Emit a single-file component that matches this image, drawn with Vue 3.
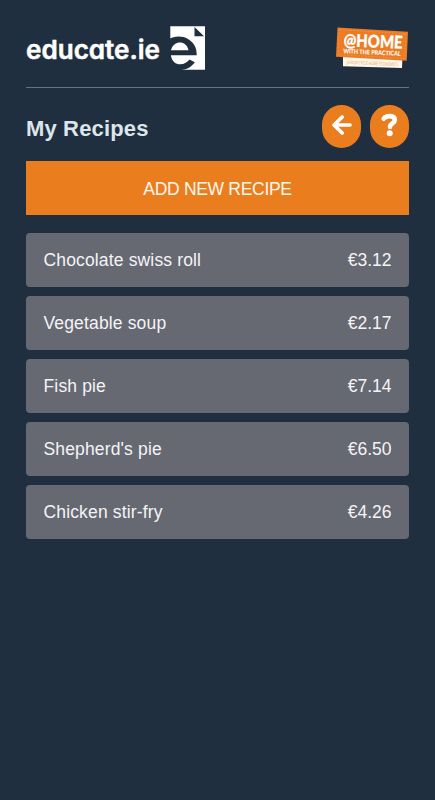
<script setup>
import { ref } from 'vue'

// Saved recipes with their total cost
const recipes = ref([
  { id: 1, name: 'Chocolate swiss roll', price: 3.12 },
  { id: 2, name: 'Vegetable soup', price: 2.17 },
  { id: 3, name: 'Fish pie', price: 7.14 },
  { id: 4, name: "Shepherd's pie", price: 6.5 },
  { id: 5, name: 'Chicken stir-fry', price: 4.26 }
])
</script>

<template>
  <div class="app">
    <header class="header">
      <svg class="logo" width="180" height="46" viewBox="0 0 180 46">
        <text class="logo-text" x="0" y="32.800" textLength="134" lengthAdjust="spacingAndGlyphs">educate.ie</text>
        <path d="M144.300 0.300H179V43.800H144.300Z" fill="#fff" />
        <path d="M168.500 1V10.300H178Z" fill="#1f2f3f" />
        <path
          d="M143 13C148 10 156 9.500 162 13C168 16.500 171 22 170.700 29.300H143V24.300H162.500C160.500 14 147.500 14 145 24.300H143Z"
          fill="#1f2f3f"
        />
        <path
          d="M143 29H144.800C146 36 150 38.300 154 38.300C158.500 38.300 161.500 36 163.500 33.500L168.800 36.300C166 40.500 161.500 43.300 156.500 43.700V45H143Z"
          fill="#1f2f3f"
        />
      </svg>

      <svg class="badge" width="74" height="44" viewBox="0 0 74 44">
        <path d="M8 28L67.500 30L67 42L8 40.300Z" fill="#fff8ea" />
        <path d="M2.500 1.500L73 5.700L71.700 34.700L1 30.700Z" fill="#ec7c24" />
        <path d="M4.500 3.700L71 7.700L69.800 32.500L3.200 28.700Z" fill="none" stroke="#f3a566" stroke-width="0.500" stroke-dasharray="2 1.500" />
        <g transform="rotate(2.500 36 20)">
          <text class="badge-title" x="8.500" y="21.300" textLength="59" lengthAdjust="spacingAndGlyphs">@HOME</text>
          <text class="badge-sub" x="8.500" y="28.500" textLength="57.500" lengthAdjust="spacingAndGlyphs">WITH THE PRACTICAL</text>
          <text class="badge-note" x="12.500" y="39" textLength="51" lengthAdjust="spacingAndGlyphs">JUNIOR CYCLE HOME ECONOMICS</text>
        </g>
      </svg>
    </header>

    <div class="title-row">
      <h1>My Recipes</h1>
      <div class="actions">
        <button class="btn_round" aria-label="Back">
          <svg width="20" height="20" viewBox="0 0 20 20">
            <path d="M10.200 2L2 10L10.200 18M2.500 10H18" fill="none" stroke="#fff" stroke-width="3.600" stroke-linecap="round" stroke-linejoin="round" />
          </svg>
        </button>
        <button class="btn_round" aria-label="Help">
          <svg width="18" height="24" viewBox="0 0 18 24">
            <path d="M3.700 5.700C6 2.300 14.800 1.800 14.800 7C14.800 10.600 10 10.200 10 14" fill="none" stroke="#fff" stroke-width="4.600" stroke-linecap="round" />
            <circle cx="9.700" cy="20.200" r="3" fill="#fff" />
          </svg>
        </button>
      </div>
    </div>

    <button class="btn_add">ADD NEW RECIPE</button>

    <ul class="recipes">
      <li v-for="recipe in recipes" :key="recipe.id" class="recipe">
        <span class="name">{{ recipe.name }}</span>
        <span>€{{ recipe.price.toFixed(2) }}</span>
      </li>
    </ul>
  </div>
</template>

<style>
body {
  margin: 0;
  background-color: #1f2f3f;
}
</style>

<style scoped>
.app {
  box-sizing: border-box;
  min-height: 800px;
  padding: 26px 26px 0;
  background-color: #1f2f3f;
  color: #f4f4f6;
  font-family: "Liberation Sans", Arial, sans-serif;
  font-size: 17.5px;
}

.header {
  display: flex;
  justify-content: space-between;
  align-items: flex-start;
  height: 61px;
  border-bottom: 1px solid #687382;
}

.logo {
  display: block;
}
.logo-text {
  fill: #fff;
  stroke: #fff;
  stroke-width: 0.5;
  font-family: Inter, sans-serif;
  font-size: 26px;
  font-weight: 600;
  font-feature-settings: "cv11";
}

.badge {
  display: block;
  overflow: visible;
}
.badge-title {
  fill: #fff;
  stroke: #fff;
  stroke-width: 0.3;
  font-family: Lato, sans-serif;
  font-size: 17.5px;
  font-weight: 900;
}
.badge-sub {
  fill: #fff;
  font-family: Lato, sans-serif;
  font-size: 6.2px;
  font-weight: 900;
}
.badge-note {
  fill: #e39a5c;
  font-family: "Open Sans", sans-serif;
  font-size: 5px;
}

.title-row {
  display: flex;
  justify-content: space-between;
  align-items: center;
  height: 43px;
  padding: 17px 0 13px;
}

h1 {
  margin: 5px 0 0;
  color: #dce5eb;
  font-size: 22px;
  font-weight: bold;
  letter-spacing: 0.15px;
}

.actions {
  display: flex;
  gap: 8.6px;
}

.btn_round {
  display: flex;
  justify-content: center;
  align-items: center;
  width: 39.2px;
  height: 43px;
  padding: 0 0 3px;
  border: none;
  border-radius: 20px;
  background-color: #ea7e1f;
  cursor: pointer;
}

.btn_add {
  display: block;
  width: 100%;
  height: 54.4px;
  padding: 2px 0 0;
  border: none;
  background-color: #ea7e1f;
  color: #fff6ee;
  font-family: inherit;
  font-size: 17.5px;
  letter-spacing: -0.3px;
  cursor: pointer;
}

.recipes {
  display: flex;
  flex-direction: column;
  gap: 8.6px;
  margin: 17.3px 0 0;
  padding: 0;
  list-style: none;
}

.recipe {
  box-sizing: border-box;
  display: flex;
  justify-content: space-between;
  align-items: center;
  height: 54.4px;
  padding: 2px 17.5px 0;
  border-radius: 4px;
  background-color: #666872;
}
.name {
  letter-spacing: 0.15px;
}
</style>
